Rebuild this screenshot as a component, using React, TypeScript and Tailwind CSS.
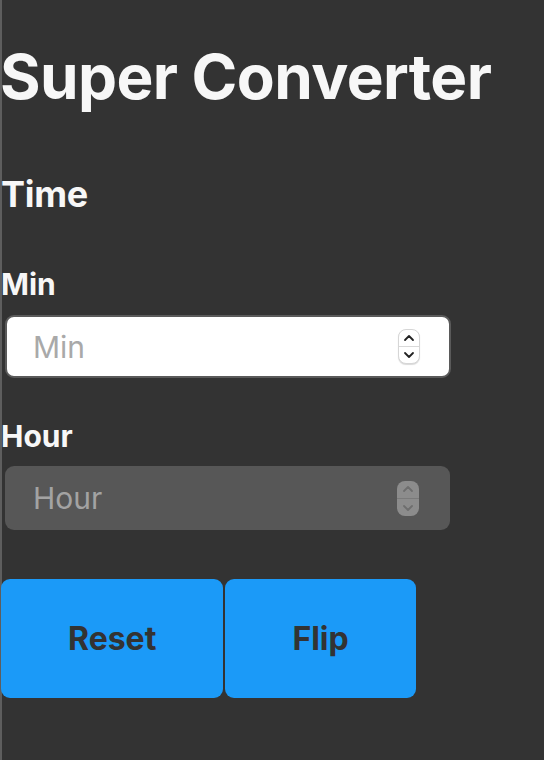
import React from "react";

function Spinner({ disabled }: { disabled?: boolean }) {
  return (
    <div
      className={
        disabled
          ? "flex h-[35px] w-[22px] flex-col items-center justify-between rounded-[8px] bg-[#8c8c8c] py-[4px]"
          : "flex h-[35px] w-[22px] flex-col items-center justify-between rounded-[8px] border border-[#d6d6d6] bg-white py-[4px] shadow-[0_1px_1px_rgba(0,0,0,0.15)]"
      }
    >
      <svg width="12" height="8" viewBox="0 0 12 8" fill="none">
        <path d="M2 6 L6 2 L10 6" stroke={disabled ? "#6e6e6e" : "#222"} strokeWidth="1.8" strokeLinecap="round" strokeLinejoin="round" />
      </svg>
      <div className={disabled ? "h-px w-full bg-[#7a7a7a]" : "h-px w-full bg-[#d9d9d9]"} />
      <svg width="12" height="8" viewBox="0 0 12 8" fill="none">
        <path d="M2 2 L6 6 L10 2" stroke={disabled ? "#6e6e6e" : "#222"} strokeWidth="1.8" strokeLinecap="round" strokeLinejoin="round" />
      </svg>
    </div>
  );
}

export default function App() {
  return (
    <div className="min-h-[760px] border-l-2 border-[#5e5e5e] bg-[#333333] font-['Inter','Liberation_Sans',sans-serif] text-[#f7f7f7]">
      <h1 className="-ml-[2px] pt-[39px] text-[62px] font-bold leading-[76px] tracking-[-0.6px]">Super Converter</h1>
      <h2 className="-ml-[1px] mt-[57px] text-[36px] font-bold leading-[44px] tracking-[-0.3px]">Time</h2>

      <label className="-ml-[1px] mt-[50px] block text-[30px] font-bold leading-[36px]">Min</label>
      <div className="ml-[3px] mt-[13px] flex h-[63px] w-[446px] items-center justify-between rounded-[9px] border-2 border-[#5a5a5a] bg-white pl-[26px] pr-[29px]">
        <span className="text-[30px] leading-[36px] text-[#a9a9a9]">Min</span>
        <Spinner />
      </div>

      <label className="-ml-[1px] mt-[40px] block text-[30px] font-bold leading-[36px]">Hour</label>
      <div className="ml-[3px] mt-[12px] flex h-[64px] w-[445px] items-center justify-between rounded-[9px] bg-[#575757] pl-[28px] pr-[31px]">
        <span className="text-[30px] leading-[36px] text-[#a3a3a3]">Hour</span>
        <Spinner disabled />
      </div>

      <div className="-ml-[1px] mt-[49px] flex gap-[2px]">
        <button className="h-[119px] rounded-[9px] bg-[#1b9af8] px-[67px] text-[32px] font-bold text-[#333333]">Reset</button>
        <button className="h-[119px] rounded-[9px] bg-[#1b9af8] px-[67px] text-[32px] font-bold text-[#333333]">Flip</button>
      </div>
    </div>
  );
}
